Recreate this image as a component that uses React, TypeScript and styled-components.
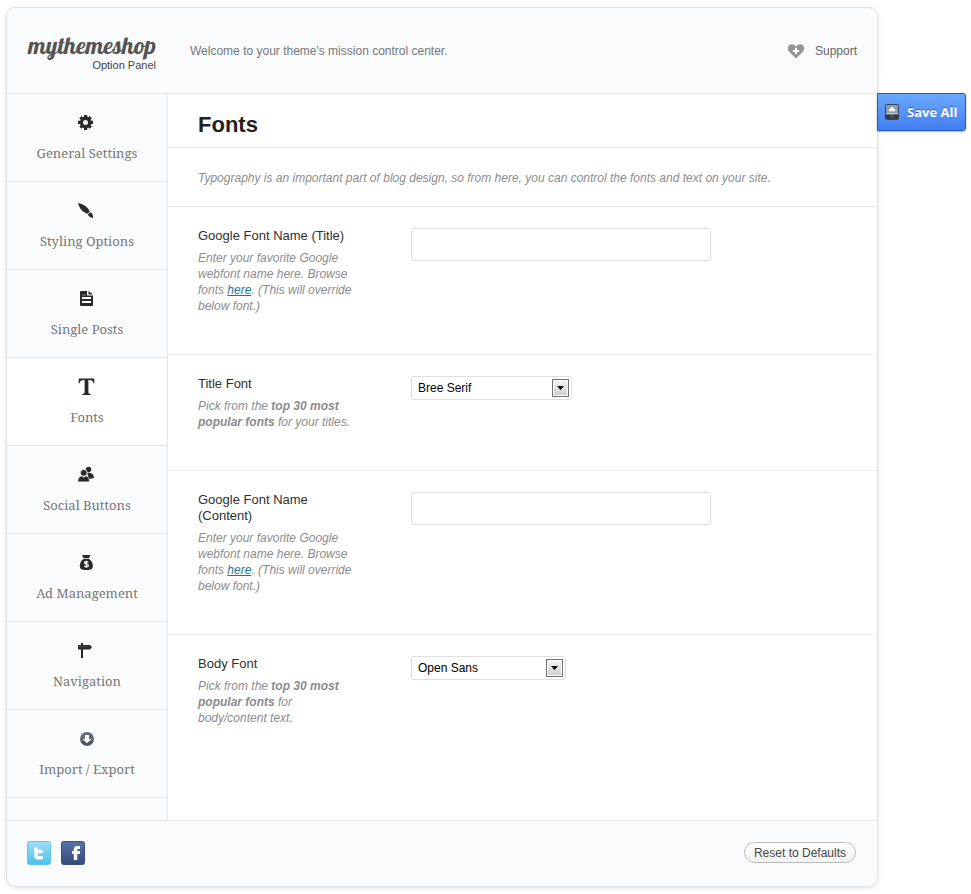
import React, { useState } from "react";
import styled, { createGlobalStyle } from "styled-components";

const line = "#e5e6e7";
const tint = "#fafbfd";

const GlobalStyle = createGlobalStyle`
  *, *::before, *::after { box-sizing: border-box; }
  body {
    margin: 0;
    background: #fff;
    color: #2f2f2f;
    font: 12px/16px "Liberation Sans", Arial, sans-serif;
  }
  button, input, select { font: inherit; }
`;

const Page = styled.form`
  display: flex;
  align-items: flex-start;
  padding: 7px 5px 7px 6px;
`;

const Panel = styled.div`
  flex: 1;
  min-width: 0;
  background: #fff;
  border: 1px solid #e0e2e3;
  border-radius: 10px;
  box-shadow: 0 1px 4px rgba(0, 0, 0, 0.12);
  overflow: hidden;
`;

const Header = styled.header`
  display: flex;
  align-items: center;
  height: 86px;
  padding: 0 20px;
  background: ${tint};
  border-bottom: 1px solid ${line};
`;

const Brand = styled.div`
  width: 129px;
  margin-right: 34px;
  padding-top: 4px;
  text-align: right;
`;

const Logo = styled.div`
  color: #555;
  font: 24px/24px Lobster, "Liberation Serif", serif;
  white-space: nowrap;
`;

const LogoCaption = styled.div`
  color: #444;
  font-size: 11px;
  line-height: 16px;
`;

const Welcome = styled.p`
  flex: 1;
  margin: 0;
  color: #777;
`;

const SupportLink = styled.a`
  display: flex;
  align-items: center;
  gap: 10px;
  color: #666;
  text-decoration: none;
`;

const Body = styled.div`
  display: flex;
`;

const Sidebar = styled.nav`
  flex: none;
  width: 161px;
  padding-bottom: 22px;
  background: ${tint};
  border-right: 1px solid ${line};
`;

const NavItem = styled.a<{ $active: boolean }>`
  display: flex;
  flex-direction: column;
  align-items: center;
  gap: 13px;
  height: 88px;
  padding-top: 20px;
  background: ${(p) => (p.$active ? "#fff" : tint)};
  border-bottom: 1px solid ${line};
  color: #777;
  font: 13px/18px "Droid Serif", "Noto Serif", "DejaVu Serif Condensed", "DejaVu Serif", serif;
  text-decoration: none;
`;

const Content = styled.main`
  flex: 1;
  min-width: 0;
`;

const Heading = styled.h1`
  margin: 0;
  padding: 19px 30px 10px;
  border-bottom: 1px solid ${line};
  color: #222;
  font-size: 22px;
  line-height: 24px;
`;

const Intro = styled.p`
  margin: 0;
  padding: 22px 30px 20px;
  border-bottom: 1px solid ${line};
  color: #8c8c8c;
  font-style: italic;
`;

const Row = styled.section`
  display: flex;
  gap: 55px;
  padding: 21px 30px 40px;
  border-bottom: 1px solid #eee;

  &:last-child { border-bottom: 0; }
`;

const RowText = styled.div`
  flex: none;
  width: 158px;
`;

const Label = styled.label`
  display: block;
  margin-bottom: 6px;
  font-size: 13px;
  line-height: 16px;
`;

const Hint = styled.p`
  margin: 0;
  color: #8c8c8c;
  font-style: italic;

  a { color: #21759b; }
`;

const TextInput = styled.input`
  width: 300px;
  height: 33px;
  padding: 0 8px;
  background: #fff;
  border: 1px solid #dfdfdf;
  border-radius: 3px;
`;

const SelectBox = styled.div<{ $width: number }>`
  position: relative;
  width: ${(p) => p.$width}px;
  height: 24px;
`;

const Select = styled.select`
  display: block;
  width: 100%;
  height: 100%;
  padding: 0 26px 0 6px;
  appearance: none;
  background: #fff;
  border: 1px solid #dfdfdf;
  border-radius: 3px;
  color: #000;
`;

const SelectArrow = styled.span`
  position: absolute;
  top: 3px;
  right: 3px;
  display: flex;
  align-items: center;
  justify-content: center;
  width: 17px;
  height: 18px;
  background: linear-gradient(#f4f4f4, #cfcfcf);
  border: 1px solid #707070;
  box-shadow: inset 0 0 0 1px #fff;
  pointer-events: none;
`;

const Footer = styled.footer`
  display: flex;
  align-items: center;
  gap: 10px;
  height: 66px;
  padding: 0 21px 2px 20px;
  background: ${tint};
  border-top: 1px solid ${line};
`;

const SocialLink = styled.a`
  display: block;
  height: 24px;
`;

const ResetButton = styled.button`
  height: 21px;
  margin-left: auto;
  padding: 0 9px;
  background: linear-gradient(#fff, #f2f2f2);
  border: 1px solid #bbb;
  border-radius: 11px;
  color: #464646;
`;

const SaveButton = styled.button`
  display: flex;
  flex: none;
  align-items: center;
  gap: 8px;
  width: 89px;
  height: 38px;
  margin: 86px 0 0 -1px;
  padding: 0 0 0 7px;
  position: relative;
  background: linear-gradient(#6aa9ff, #437df0);
  border: 1px solid #1f57c5;
  border-radius: 0 3px 3px 0;
  box-shadow: 0 1px 2px rgba(0, 0, 0, 0.3);
  color: #fff;
  font: bold 13px/18px "Open Sans", sans-serif;
  text-shadow: 0 -1px 0 #2a5fe0;
  white-space: nowrap;
`;

const Icon = styled.svg`
  display: block;
  flex: none;
`;

type IconProps = { children: React.ReactNode };

const NavIcon = ({ children }: IconProps) => (
  <Icon width="18" height="17" viewBox="0 0 18 17" fill="#292929" aria-hidden="true">
    {children}
  </Icon>
);

const icons = {
  gear: (
    <NavIcon>
      <path
        fillRule="evenodd"
        d="M6 1h3.2v1.8l1.2.5 1.3-1.3 2.2 2.2-1.3 1.3.5 1.2H15v3.4h-1.9l-.5 1.2 1.3 1.3-2.2 2.2-1.3-1.3-1.2.5V16H6v-2l-1.2-.5-1.3 1.3-2.2-2.2 1.3-1.3-.5-1.2H0V6.7h2.1l.5-1.2-1.3-1.3L3.5 2l1.3 1.3L6 2.8zM7.5 5.9a2.5 2.5 0 1 0 0 5 2.5 2.5 0 0 0 0-5z"
      />
    </NavIcon>
  ),
  brush: (
    <NavIcon>
      <path d="M0.2 1C5.4 2 10 5.4 11.8 9.6L9.6 11.8C4.2 10 1 6 .2 1z" />
      <path d="M12.2 10.3 10 12.3C10.2 14.4 12.2 15.9 15.4 15.9 14.8 14.6 15.2 11.6 12.2 10.3z" />
    </NavIcon>
  ),
  page: (
    <NavIcon>
      <path d="M3 1h6v4.5h6V15q0 1-1 1H3q-1 0-1-1V2q0-1 1-1z" />
      <path d="M10.5 1 15 4.5h-4.5z" />
      <path d="M4 8h9M4 12h9" stroke="#fff" strokeWidth="2" />
      <path d="M4 5h4" stroke="#8a8a8a" />
    </NavIcon>
  ),
  type: (
    <NavIcon>
      <path d="M.8 0.5h15.4l.3 4.8h-1C15 2.8 13.8 1.8 10.4 1.9v12.4c0 1.2.6 1.5 2.3 1.6v1H4.3v-1c1.7-.1 2.3-.4 2.3-1.6V1.9C3.2 1.8 2 2.8 1.5 5.3h-1z" />
    </NavIcon>
  ),
  people: (
    <NavIcon>
      <circle cx="10.5" cy="3.5" r="2.7" />
      <path d="M9 6.9c4.4-.7 6.7.9 7 5L11 13z" />
      <circle cx="5.7" cy="6.8" r="3.4" stroke={tint} strokeWidth=".8" />
      <path d="M0 15.8c0-3.6 1.2-5.3 4-5.8l1.7 1.5L7.5 10c2.7.5 3.9 2.2 3.9 5.8z" stroke={tint} strokeWidth=".4" />
    </NavIcon>
  ),
  money: (
    <NavIcon>
      <path d="M4 1h8.6l-1.6 3H5.5z" />
      <path d="M5.8 4.7h5c2.7 2 4 4.2 4 6.8 0 3.4-1.4 4.5-6.5 4.5s-6.5-1.1-6.5-4.5c0-2.6 1.3-4.8 4-6.8z" />
      <path
        d="M10.3 8.3C8.6 7.2 6.5 7.5 6.6 8.9c.1 1.7 3.8.8 3.8 2.6 0 1.5-2.4 1.8-4.1.6M8.4 6.7v7"
        fill="none"
        stroke="#fff"
        strokeWidth="1.2"
      />
    </NavIcon>
  ),
  sign: (
    <NavIcon>
      <path d="M3 1h2v2h7l2 2.3-2 2.2H5V16H3V7.5H0V3h3z" />
      <path d="M1 4.5h8" stroke="#4a4a4a" />
    </NavIcon>
  ),
  download: (
    <NavIcon>
      <circle cx="9" cy="9" r="7" fill="#626977" />
      <path d="M2.8 10.5a6.5 6.5 0 0 0 12.4 0C13 12 5 12 2.8 10.5z" fill="#4c5261" />
      <path d="M7 5h4v4h2.5L9 13.3 4.5 9H7z" fill="#fff" />
    </NavIcon>
  ),
};

const navItems: { name: string; icon: keyof typeof icons }[] = [
  { name: "General Settings", icon: "gear" },
  { name: "Styling Options", icon: "brush" },
  { name: "Single Posts", icon: "page" },
  { name: "Fonts", icon: "type" },
  { name: "Social Buttons", icon: "people" },
  { name: "Ad Management", icon: "money" },
  { name: "Navigation", icon: "sign" },
  { name: "Import / Export", icon: "download" },
];

const HeartIcon = () => (
  <Icon width="18" height="16" viewBox="0 0 18 16" aria-hidden="true">
    <path d="M9 15.5 2 8.6C-.4 5.7 1.2 1.2 4.8 1.2 6.8 1.2 8.3 2.1 9 3.8c.7-1.7 2.2-2.6 4.2-2.6 3.6 0 5.2 4.5 2.8 7.4z" fill="#949494" />
    <path d="M9 4.8v6.4M5.8 8h6.4" stroke="#fff" strokeWidth="2" />
  </Icon>
);

const DriveIcon = () => (
  <Icon width="14" height="16" viewBox="0 0 14 16" aria-hidden="true">
    <rect x=".5" y=".5" width="13" height="15" rx="1" fill="#8ba0b3" stroke="#34455b" />
    <path d="M1 10.5h12V15H1z" fill="#35383c" />
    <path d="M4 7.2C3.5 5.6 4.4 4.9 5.3 4.9 5.7 2.6 8.5 2.6 8.8 4.7c1.5-.1 1.9 1.3 1.2 2.5z" fill="#fff" />
    <path d="M1 9.5h12" stroke="#c8cdd2" />
    <path d="M6 12h2" stroke="#69b24c" />
    <path d="M2 14.2h10" stroke="#5a5a5a" strokeDasharray="1 1" />
  </Icon>
);

const TwitterIcon = () => (
  <Icon width="24" height="24" viewBox="0 0 24 24" aria-hidden="true">
    <defs>
      <linearGradient id="sky" x2="0" y2="1">
        <stop stopColor="#a5dcf7" />
        <stop offset="1" stopColor="#48c3ec" />
      </linearGradient>
    </defs>
    <rect x=".5" y=".5" width="23" height="23" rx="2" fill="url(#sky)" stroke="#62c2ea" />
    <path d="M9 7.5v7.2q0 2 2.2 2H14.5M9 10.5h5.5" fill="none" stroke="#fff" strokeWidth="3.4" strokeLinecap="round" strokeLinejoin="round" />
  </Icon>
);

const FacebookIcon = () => (
  <Icon width="24" height="24" viewBox="0 0 24 24" aria-hidden="true">
    <defs>
      <linearGradient id="navy" x2="0" y2="1">
        <stop stopColor="#5872a8" />
        <stop offset="1" stopColor="#344a7b" />
      </linearGradient>
    </defs>
    <rect x=".5" y=".5" width="23" height="23" rx="2" fill="url(#navy)" stroke="#3b5186" />
    <path d="M12.8 19v-6H11v-3h1.8V8.3C12.8 6 14.3 5 16.5 5H19v3h-1.7c-.8 0-1 .4-1 1v1H19v3h-2.7v6z" fill="#fff" />
  </Icon>
);

const FontNameHint = () => (
  <Hint>
    Enter your favorite Google webfont name here. Browse fonts <a href="#fonts">here</a>. (This will override below
    font.)
  </Hint>
);

type SelectFieldProps = { id: string; width: number; options: string[] };

const SelectField = ({ id, width, options }: SelectFieldProps) => (
  <SelectBox $width={width}>
    <Select id={id} defaultValue={options[0]}>
      {options.map((o) => (
        <option key={o}>{o}</option>
      ))}
    </Select>
    <SelectArrow>
      <Icon width="7" height="4" viewBox="0 0 7 4" aria-hidden="true">
        <path d="M0 0h7L3.5 4z" />
      </Icon>
    </SelectArrow>
  </SelectBox>
);

export default function App() {
  const [active, setActive] = useState("Fonts");

  return (
    <>
      <GlobalStyle />
      <Page onSubmit={(e) => e.preventDefault()}>
        <Panel>
          <Header>
            <Brand>
              <Logo>mythemeshop</Logo>
              <LogoCaption>Option Panel</LogoCaption>
            </Brand>
            <Welcome>Welcome to your theme's mission control center.</Welcome>
            <SupportLink href="#support">
              <HeartIcon />
              Support
            </SupportLink>
          </Header>
          <Body>
            <Sidebar>
              {navItems.map(({ name, icon }) => (
                <NavItem key={name} href="#fonts" $active={name === active} onClick={() => setActive(name)}>
                  {icons[icon]}
                  {name}
                </NavItem>
              ))}
            </Sidebar>
            <Content>
              <Heading>Fonts</Heading>
              <Intro>
                Typography is an important part of blog design, so from here, you can control the fonts and text on your
                site.
              </Intro>
              <Row>
                <RowText>
                  <Label htmlFor="title-name">Google Font Name (Title)</Label>
                  <FontNameHint />
                </RowText>
                <TextInput id="title-name" type="text" />
              </Row>
              <Row>
                <RowText>
                  <Label htmlFor="title-font">Title Font</Label>
                  <Hint>
                    Pick from the <strong>top 30 most popular fonts</strong> for your titles.
                  </Hint>
                </RowText>
                <SelectField id="title-font" width={161} options={["Bree Serif", "Lobster", "Open Sans"]} />
              </Row>
              <Row>
                <RowText>
                  <Label htmlFor="content-name">Google Font Name (Content)</Label>
                  <FontNameHint />
                </RowText>
                <TextInput id="content-name" type="text" />
              </Row>
              <Row>
                <RowText>
                  <Label htmlFor="body-font">Body Font</Label>
                  <Hint>
                    Pick from the <strong>top 30 most popular fonts</strong> for body/content text.
                  </Hint>
                </RowText>
                <SelectField id="body-font" width={155} options={["Open Sans", "Bree Serif", "Lobster"]} />
              </Row>
            </Content>
          </Body>
          <Footer>
            <SocialLink href="#twitter" aria-label="Twitter">
              <TwitterIcon />
            </SocialLink>
            <SocialLink href="#facebook" aria-label="Facebook">
              <FacebookIcon />
            </SocialLink>
            <ResetButton type="reset">Reset to Defaults</ResetButton>
          </Footer>
        </Panel>
        <SaveButton type="submit">
          <DriveIcon />
          Save All
        </SaveButton>
      </Page>
    </>
  );
}
